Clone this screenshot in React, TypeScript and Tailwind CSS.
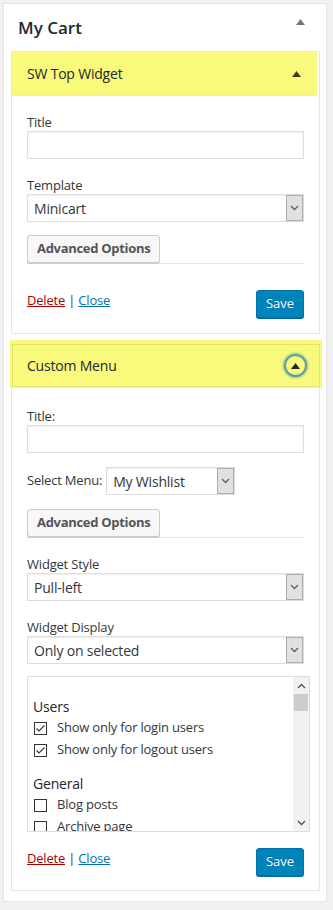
import React from "react";

const Tri = ({ color }: { color: string }) => (
  <svg width="9" height="6" viewBox="0 0 9 6">
    <path d="M4.5 0 L9 6 L0 6 Z" fill={color} />
  </svg>
);

const Chevron = ({ up = false, color = "#606060" }: { up?: boolean; color?: string }) => (
  <svg width="9" height="6" viewBox="0 0 9 6">
    <path
      d={up ? "M1 5 L4.5 1.5 L8 5" : "M1 1 L4.5 4.5 L8 1"}
      fill="none"
      stroke={color}
      strokeWidth="1.3"
    />
  </svg>
);

const Label = ({ children }: { children: React.ReactNode }) => (
  <div className="h-[18px] leading-[18px] text-[13px] text-[#32373c] tracking-[-0.2px]">{children}</div>
);

const Input = () => (
  <div className="h-[28px] border border-[#ddd] bg-white shadow-[inset_0_1px_2px_rgba(0,0,0,0.07)]" />
);

const Select = ({ value, className = "" }: { value: string; className?: string }) => (
  <div
    className={`flex h-[28px] border border-[#ddd] bg-white shadow-[inset_0_1px_2px_rgba(0,0,0,0.07)] ${className}`}
  >
    <div className="flex-1 flex items-center pl-[6px] text-[14px] text-[#32373c] whitespace-nowrap tracking-[-0.2px]">
      {value}
    </div>
    <div className="w-[17px] border border-[#adadad] bg-[#e1e1e1] flex items-center justify-center">
      <Chevron />
    </div>
  </div>
);

const AdvancedOptions = () => (
  <div className="border-b border-[#e5e5e5] h-[29px]">
    <div className="inline-flex items-center h-[28px] px-[9px] border border-[#ccc] rounded-[3px] bg-[#f7f7f7] shadow-[0_1px_0_#ccc] text-[13px] font-bold text-[#555] tracking-[-0.3px]">
      Advanced Options
    </div>
  </div>
);

const Footer = () => (
  <div className="flex justify-between items-start">
    <div className="mt-[1px] text-[13px] leading-[18px] text-[#32373c] tracking-[-0.2px]">
      <span className="text-[#a00] underline">Delete</span>
      <span> | </span>
      <span className="text-[#0073aa] underline">Close</span>
    </div>
    <div className="h-[28px] w-[48px] flex items-center justify-center rounded-[3px] bg-[#0085ba] border border-[#0073aa] shadow-[0_1px_0_#006799] text-white text-[13px] [text-shadow:0_-1px_1px_#006799]">
      Save
    </div>
  </div>
);

const Check = ({ checked }: { checked: boolean }) => (
  <div className="w-[13px] h-[13px] border border-[#333] bg-white flex items-center justify-center">
    {checked && (
      <svg width="11" height="11" viewBox="0 0 11 11">
        <path d="M1.5 5.5 L4 8 L9.5 2.5" fill="none" stroke="#333" strokeWidth="1.1" />
      </svg>
    )}
  </div>
);

const CheckRow = ({ label, checked }: { label: string; checked: boolean }) => (
  <div className="h-[22px] flex items-center gap-[10px] pl-[1px]">
    <Check checked={checked} />
    <span className="text-[13px] text-[#32373c] whitespace-nowrap tracking-[-0.2px]">{label}</span>
  </div>
);

export default function App() {
  return (
    <div className="w-[333px] h-[910px] bg-[#f1f1f1] pt-[3px] pl-[3px] font-['Open_Sans','Noto_Sans',sans-serif]">
      <div className="w-[324px] bg-white border border-[#e5e5e5] pb-[10px]">
        {/* Title row */}
        <div className="h-[47px] flex items-center justify-between pl-[14px] pr-[21px]">
          <div className="text-[17px] font-semibold text-[#23282d]">My Cart</div>
          <div className="self-start mt-[15px]">
            <Tri color="#72777c" />
          </div>
        </div>

        {/* Widget 1 */}
        <div className="ml-[7px] w-[309px] border border-[#e5e5e5]">
          <div className="h-[44px] mr-[2px] bg-[#f9f97c] border-b border-[#e5e5e5] flex items-center justify-between pl-[15px] pr-[16px]">
            <div className="text-[14px] font-medium text-[#23282d] tracking-[-0.2px]">SW Top Widget</div>
            <Tri color="#3a3d22" />
          </div>
          <div className="px-[15px] pt-[17px] pb-[15px]">
            <Label>Title</Label>
            <Input />
            <div className="h-[17px]" />
            <Label>Template</Label>
            <Select value="Minicart" />
            <div className="h-[13px]" />
            <AdvancedOptions />
            <div className="h-[26px]" />
            <Footer />
          </div>
        </div>

        {/* Widget 2 */}
        <div className="mt-[6px]">
          <div className="ml-[6px] w-[312px] bg-[#f9f97c] pt-[4px] pl-[2px] pr-[2px] pb-[1px]">
            <div className="h-[43px] border border-[#e3e371] flex items-center justify-between pl-[14px] pr-[12px]">
              <div className="text-[14px] font-medium text-[#23282d] tracking-[-0.2px]">Custom Menu</div>
              <div className="w-[23px] h-[23px] rounded-full border-2 border-[#5a9ca8] shadow-[0_0_2px_1px_rgba(30,140,190,0.5)] flex items-center justify-center">
                <Tri color="#23282d" />
              </div>
            </div>
          </div>
          <div className="ml-[7px] w-[309px] border-x border-b border-[#e5e5e5] px-[15px] pt-[19px] pb-[14px]">
            <Label>Title:</Label>
            <Input />
            <div className="h-[14px]" />
            <div className="flex items-center h-[28px]">
              <span className="text-[13px] text-[#32373c] mr-[4px] tracking-[-0.2px]">Select Menu:</span>
              <Select value="My Wishlist" className="w-[129px]" />
            </div>
            <div className="h-[14px]" />
            <AdvancedOptions />
            <div className="h-[17px]" />
            <Label>Widget Style</Label>
            <Select value="Pull-left" />
            <div className="h-[17px]" />
            <Label>Widget Display</Label>
            <Select value="Only on selected" />
            <div className="h-[12px]" />
            <div className="w-[283px] h-[156px] border border-[#ddd] bg-white flex overflow-hidden">
              <div className="flex-1 pl-[5px] pt-[18px] overflow-hidden">
                <div className="h-[22px] flex items-center text-[14px] font-medium text-[#23282d] tracking-[-0.2px]">Users</div>
                <CheckRow label="Show only for login users" checked />
                <CheckRow label="Show only for logout users" checked />
                <div className="h-[11px]" />
                <div className="h-[22px] flex items-center text-[14px] font-medium text-[#23282d] tracking-[-0.2px]">General</div>
                <CheckRow label="Blog posts" checked={false} />
                <CheckRow label="Archive page" checked={false} />
              </div>
              <div className="w-[16px] bg-[#f1f1f1] flex flex-col items-center">
                <div className="h-[17px] flex items-center justify-center">
                  <Chevron up color="#505050" />
                </div>
                <div className="w-[14px] h-[17px] bg-[#cdcdcd]" />
                <div className="flex-1" />
                <div className="h-[17px] flex items-center justify-center">
                  <Chevron color="#505050" />
                </div>
              </div>
            </div>
            <div className="h-[16px]" />
            <Footer />
          </div>
        </div>
      </div>
    </div>
  );
}
